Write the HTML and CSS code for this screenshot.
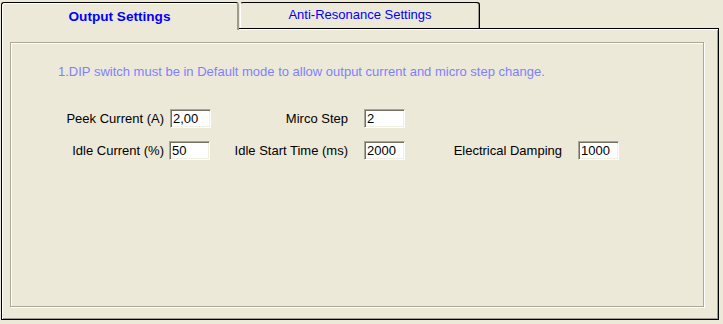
FILE: index.html
```html
<!DOCTYPE html>
<html>
<head>
<meta charset="utf-8">
<link rel="stylesheet" href="styles.css">
</head>
<body>
<div class="tabs">
  <div class="tab tab-active">Output Settings</div>
  <div class="tab tab-inactive">Anti-Resonance Settings</div>
</div>
<div class="panel">
  <div class="groove">
    <div class="note">1.DIP switch must be in Default mode to allow output current and micro step change.</div>
    <div class="form">
      <label class="lbl lbl-1">Peek Current (A)</label>
      <input class="field" type="text" value="2,00">
      <label class="lbl lbl-2">Mirco Step</label>
      <input class="field" type="text" value="2">
      <span></span><span></span>
      <label class="lbl lbl-1">Idle Current (%)</label>
      <input class="field field-shift" type="text" value="50">
      <label class="lbl lbl-2">Idle Start Time (ms)</label>
      <input class="field" type="text" value="2000">
      <label class="lbl lbl-3">Electrical Damping</label>
      <input class="field" type="text" value="1000">
    </div>
  </div>
</div>
</body>
</html>
```

FILE: styles.css
```css
html, body {
  margin: 0;
  padding: 0;
  background: #ece9d8;
}
body {
  width: 723px;
  height: 324px;
  overflow: hidden;
  font-family: "Liberation Sans", Arial, sans-serif;
  font-size: 13px;
  color: #000;
}
.tabs {
  display: flex;
  align-items: flex-start;
  height: 28px;
  padding-top: 2px;
  padding-left: 1px;
  box-sizing: border-box;
}
.tab {
  box-sizing: border-box;
  text-align: center;
  color: #0000ff;
  line-height: 15px;
  border-radius: 3px 3px 0 0;
  background: #ece9d8;
}
.tab-active {
  position: relative;
  z-index: 1;
  width: 238px;
  height: 28px;
  border-left: 1px solid #000;
  border-top: 1px solid #000;
  border-right: 2px solid #9f9c8e;
  box-shadow: inset 1px 1px 0 #fff;
  font-weight: bold;
  font-size: 13.6px;
  padding-top: 6px;
}
.tab-inactive {
  width: 240px;
  height: 26px;
  margin-left: 1px;
  border-left: 1px solid #fff;
  border-top: 1px solid #000;
  border-right: 1px solid #000;
  box-shadow: inset -1px 0 0 #9f9c8e;
  padding-top: 4px;
}
.panel {
  box-sizing: border-box;
  margin-left: 1px;
  width: 718px;
  height: 292px;
  border: 1px solid #000;
  box-shadow: inset 1px 1px 0 #fff, inset -1px -1px 0 #9f9c8e;
  padding: 13px 0 0 8px;
}
.groove {
  box-sizing: border-box;
  width: 694px;
  height: 265px;
  border: 1px solid #aca899;
  box-shadow: 1px 1px 0 #fff, inset 1px 1px 0 #fff;
  padding-top: 21px;
}
.note {
  margin-left: 47px;
  line-height: 15px;
  color: #8080ff;
}
.form {
  margin-top: 30px;
  display: grid;
  grid-template-columns: 159px 41px 153px 41px 173px 41px;
  grid-auto-rows: 19px;
  row-gap: 13px;
  align-items: center;
}
.lbl {
  line-height: 15px;
  text-align: right;
  white-space: nowrap;
}
.lbl-1 { padding-right: 6px; }
.lbl-2 { padding-right: 16px; }
.lbl-3 { padding-right: 16px; }
.field {
  box-sizing: border-box;
  width: 41px;
  height: 19px;
  margin: 0;
  padding: 0 1px 0 2px;
  font-family: "Liberation Sans", Arial, sans-serif;
  font-size: 13px;
  line-height: 15px;
  color: #000;
  background: #fff;
  border-top: 1px solid #aca899;
  border-left: 1px solid #aca899;
  border-right: 1px solid #fff;
  border-bottom: 1px solid #fff;
  box-shadow: inset 1px 1px 0 #716f64, inset -1px -1px 0 #f1efe2;
  outline: none;
}
.field-shift {
  margin-left: -1px;
}
```
